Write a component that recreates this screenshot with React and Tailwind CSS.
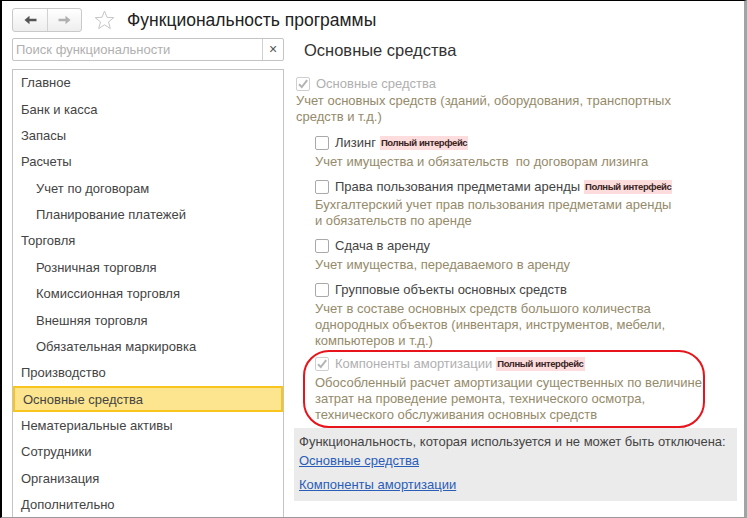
import React from "react";

const menu = [
  { label: "Главное" },
  { label: "Банк и касса" },
  { label: "Запасы" },
  { label: "Расчеты" },
  { label: "Учет по договорам", sub: true },
  { label: "Планирование платежей", sub: true },
  { label: "Торговля" },
  { label: "Розничная торговля", sub: true },
  { label: "Комиссионная торговля", sub: true },
  { label: "Внешняя торговля", sub: true },
  { label: "Обязательная маркировка", sub: true },
  { label: "Производство" },
  { label: "Основные средства", active: true },
  { label: "Нематериальные активы" },
  { label: "Сотрудники" },
  { label: "Организация" },
  { label: "Дополнительно" },
];

const Checkbox = ({ checked, disabled }) => (
  <span
    className={`w-[14px] h-[14px] rounded-[2px] border flex items-center justify-center shrink-0 bg-white ${
      disabled ? "border-[#cfcfcf]" : "border-[#a9a9a9]"
    }`}
  >
    {checked && (
      <svg width="12" height="12" viewBox="0 0 12 12">
        <path d="M2 6.2 L4.8 9 L10.2 2.2" fill="none" stroke="#b4b4b4" strokeWidth="2" />
      </svg>
    )}
  </span>
);

const Badge = () => (
  <span className="ml-[4px] bg-[#fcdcdc] text-[#3a2424] text-[9.5px] font-bold leading-[14px] px-[1px] tracking-[-0.4px]">
    Полный интерфейс
  </span>
);

const Option = ({ label, checked, disabled, badge }) => (
  <div className="h-[16px] flex items-center">
    <Checkbox checked={checked} disabled={disabled} />
    <span className={`ml-[6px] ${disabled ? "text-[#b0b0b0]" : "text-[#444]"}`}>{label}</span>
    {badge && <Badge />}
  </div>
);

const Desc = ({ children, className = "" }) => (
  <div className={`text-[#958a6a] leading-[16px] ${className}`}>{children}</div>
);

export default function App() {
  return (
    <div
      className="w-[747px] h-[518px] bg-white flex flex-col border-t border-l-2 border-r-[3px] border-b border-t-black border-l-black border-r-[#a3a3a3] border-b-[#9a9a9a] overflow-hidden text-[13px]"
      style={{ fontFamily: '"Liberation Sans", Arial, sans-serif' }}
    >
      {/* Header */}
      <div className="h-[24px] mt-[7px] ml-[10px] flex items-center">
        <div className="w-[70px] h-[24px] flex rounded-[3px] border border-[#c9c9c9] bg-gradient-to-b from-white to-[#eeeeee]">
          <div className="w-[35px] flex items-center justify-center border-r border-[#d2d2d2]">
            <svg width="13" height="10" viewBox="0 0 13 10">
              <path d="M0.5 5 L5.5 0.8 L5.5 3.8 L12.5 3.8 L12.5 6.2 L5.5 6.2 L5.5 9.2 Z" fill="#555" />
            </svg>
          </div>
          <div className="flex-1 flex items-center justify-center">
            <svg width="13" height="10" viewBox="0 0 13 10">
              <path d="M12.5 5 L7.5 0.8 L7.5 3.8 L0.5 3.8 L0.5 6.2 L7.5 6.2 L7.5 9.2 Z" fill="#b0b0b0" />
            </svg>
          </div>
        </div>
        <svg className="ml-[12px]" width="21" height="20" viewBox="0 0 21 20">
          <path
            d="M10.5 1 L13 7.3 L19.8 7.6 L14.5 11.9 L16.3 18.6 L10.5 14.8 L4.7 18.6 L6.5 11.9 L1.2 7.6 L8 7.3 Z"
            fill="none"
            stroke="#c6c6c6"
            strokeWidth="1"
          />
        </svg>
        <span className="ml-[12px] text-[17.5px] text-[#222]">Функциональность программы</span>
      </div>

      {/* Body */}
      <div className="flex flex-1 mt-[6px] min-h-0">
        {/* Left column */}
        <div className="w-[272px] ml-[10px] flex flex-col">
          <div className="h-[24px] flex border border-[#c4c4c4] rounded-[2px]">
            <span className="flex-1 pl-[3px] flex items-center text-[#b0b0b0]">Поиск функциональности</span>
            <span className="w-[21px] border-l border-[#d0d0d0] flex items-center justify-center text-[#555] text-[14px]">
              ×
            </span>
          </div>
          <div className="mt-[8px] flex-1 border border-[#c4c4c4] border-b-0">
            {menu.map((m) => (
              <div
                key={m.label}
                className={`h-[26.35px] flex items-center text-[#444] ${m.sub ? "pl-[23px]" : "pl-[8px]"} ${
                  m.active ? "bg-[#fce58e] border-2 border-[#f7c51e] pl-[6px]" : ""
                }`}
              >
                {m.label}
              </div>
            ))}
          </div>
        </div>

        {/* Right column */}
        <div className="w-[443px] ml-[10px] flex flex-col">
          <div className="h-[24px] pl-[10px] flex items-center text-[16.5px] text-[#333]">Основные средства</div>

          <div className="pl-[2px] mt-[14px]">
            <Option label="Основные средства" checked disabled />
            <Desc className="mt-[1px]">
              Учет основных средств (зданий, оборудования, транспортных
              <br />
              средств и т.д.)
            </Desc>

            <div className="pl-[19px]">
              <div className="mt-[10px]">
                <Option label="Лизинг" badge />
              </div>
              <Desc className="mt-[3px]">Учет имущества и обязательств&nbsp; по договорам лизинга</Desc>

              <div className="mt-[9px]">
                <Option label="Права пользования предметами аренды" badge />
              </div>
              <Desc className="mt-[2px]">
                Бухгалтерский учет прав пользования предметами аренды
                <br />и обязательств по аренде
              </Desc>

              <div className="mt-[9px]">
                <Option label="Сдача в аренду" />
              </div>
              <Desc className="mt-[3px]">Учет имущества, передаваемого в аренду</Desc>

              <div className="mt-[9px]">
                <Option label="Групповые объекты основных средств" />
              </div>
              <Desc className="mt-[3px]">
                Учет в составе основных средств большого количества
                <br />
                однородных объектов (инвентаря, инструментов, мебели,
                <br />
                компьютеров и т.д.)
              </Desc>
            </div>

            <div className="ml-[7px] mr-[32px] mt-[1px] border-2 border-[#e8141c] rounded-[26px] pl-[10px] pt-[4px] pb-[3px]">
              <Option label="Компоненты амортизации" checked disabled badge />
              <Desc className="mt-[3px]">
                Обособленный расчет амортизации существенных по величине
                <br />
                затрат на проведение ремонта, технического осмотра,
                <br />
                технического обслуживания основных средств
              </Desc>
            </div>
          </div>

          <div className="h-[73px] bg-[#ebebeb] pl-[5px] pt-[6px]">
            <div className="text-[#444] leading-[16px]">Функциональность, которая используется и не может быть отключена:</div>
            <div className="mt-[3px] leading-[16px] text-[#2a5db8] underline">Основные средства</div>
            <div className="mt-[8px] leading-[16px] text-[#2a5db8] underline">Компоненты амортизации</div>
          </div>
        </div>
      </div>
    </div>
  );
}
